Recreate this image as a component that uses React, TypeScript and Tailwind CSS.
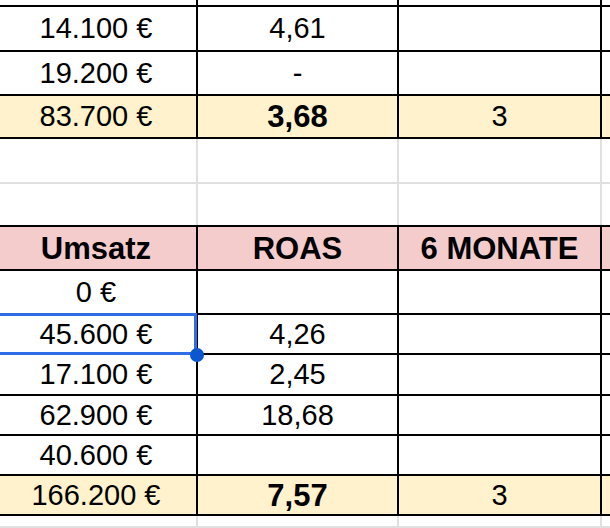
import React from "react";

type RowProps = {
  h: string;
  cells: [string, string, string];
  kind?: "plain" | "total" | "header";
  bottom: "black" | "gray";
  vline: "black" | "gray";
  selected?: boolean;
};

function Row({ h, cells, kind = "plain", bottom, vline, selected }: RowProps) {
  const bg =
    kind === "total" ? "bg-[#fff2cc]" : kind === "header" ? "bg-[#f4cccc]" : "bg-white";
  const bb = bottom === "black" ? "border-b-2 border-b-black" : "border-b-2 border-b-[#e0e0e0]";
  const vr = vline === "black" ? "border-r-2 border-r-black" : "border-r-2 border-r-[#e0e0e0]";
  const txt = (i: number) =>
    kind === "header"
      ? "text-[31px] font-bold"
      : kind === "total" && i === 1
      ? "text-[31px] font-bold"
      : "text-[29px]";
  return (
    <div className={`flex w-full ${h} ${bb} ${bg}`}>
      <div className={`relative flex w-[198px] shrink-0 items-center justify-center pr-1 ${vr}`}>
        <span className={`whitespace-nowrap leading-none ${txt(0)}`}>{cells[0]}</span>
        {selected && (
          <>
            <div className="absolute left-[-4px] top-[-2px] z-10 h-[42px] w-[201px] border-[3px] border-[#2f6ee6]" />
            <div className="absolute left-[190px] top-[33px] z-20 h-[14px] w-[14px] rounded-full bg-[#0b57d0]" />
          </>
        )}
      </div>
      <div className={`flex w-[201px] shrink-0 items-center justify-center ${vr}`}>
        <span className={`whitespace-nowrap leading-none ${txt(1)}`}>{cells[1]}</span>
      </div>
      <div className={`flex w-[203px] shrink-0 items-center justify-center ${vr}`}>
        <span className={`whitespace-nowrap leading-none ${txt(2)}`}>{cells[2]}</span>
      </div>
      <div className="flex-1" />
    </div>
  );
}

export default function App() {
  return (
    <div
      className="flex h-[528px] w-[610px] flex-col overflow-hidden bg-white text-black"
      style={{ fontFamily: '"Liberation Sans", Arial, sans-serif' }}
    >
      <Row h="h-[7px]" cells={["", "", ""]} bottom="black" vline="black" />
      <Row h="h-[45px]" cells={["14.100 €", "4,61", ""]} bottom="black" vline="black" />
      <Row h="h-[44px]" cells={["19.200 €", "-", ""]} bottom="black" vline="black" />
      <Row h="h-[43px]" cells={["83.700 €", "3,68", "3"]} kind="total" bottom="black" vline="black" />
      <Row h="h-[45px]" cells={["", "", ""]} bottom="gray" vline="gray" />
      <Row h="h-[43px]" cells={["", "", ""]} bottom="black" vline="gray" />
      <Row h="h-[44px]" cells={["Umsatz", "ROAS", "6 MONATE"]} kind="header" bottom="black" vline="black" />
      <Row h="h-[44px]" cells={["0 €", "", ""]} bottom="black" vline="black" />
      <Row h="h-[40px]" cells={["45.600 €", "4,26", ""]} bottom="black" vline="black" selected />
      <Row h="h-[41px]" cells={["17.100 €", "2,45", ""]} bottom="black" vline="black" />
      <Row h="h-[40px]" cells={["62.900 €", "18,68", ""]} bottom="black" vline="black" />
      <Row h="h-[40px]" cells={["40.600 €", "", ""]} bottom="black" vline="black" />
      <Row h="h-[40px]" cells={["166.200 €", "7,57", "3"]} kind="total" bottom="black" vline="black" />
      <Row h="h-[12px]" cells={["", "", ""]} bottom="gray" vline="gray" />
    </div>
  );
}
